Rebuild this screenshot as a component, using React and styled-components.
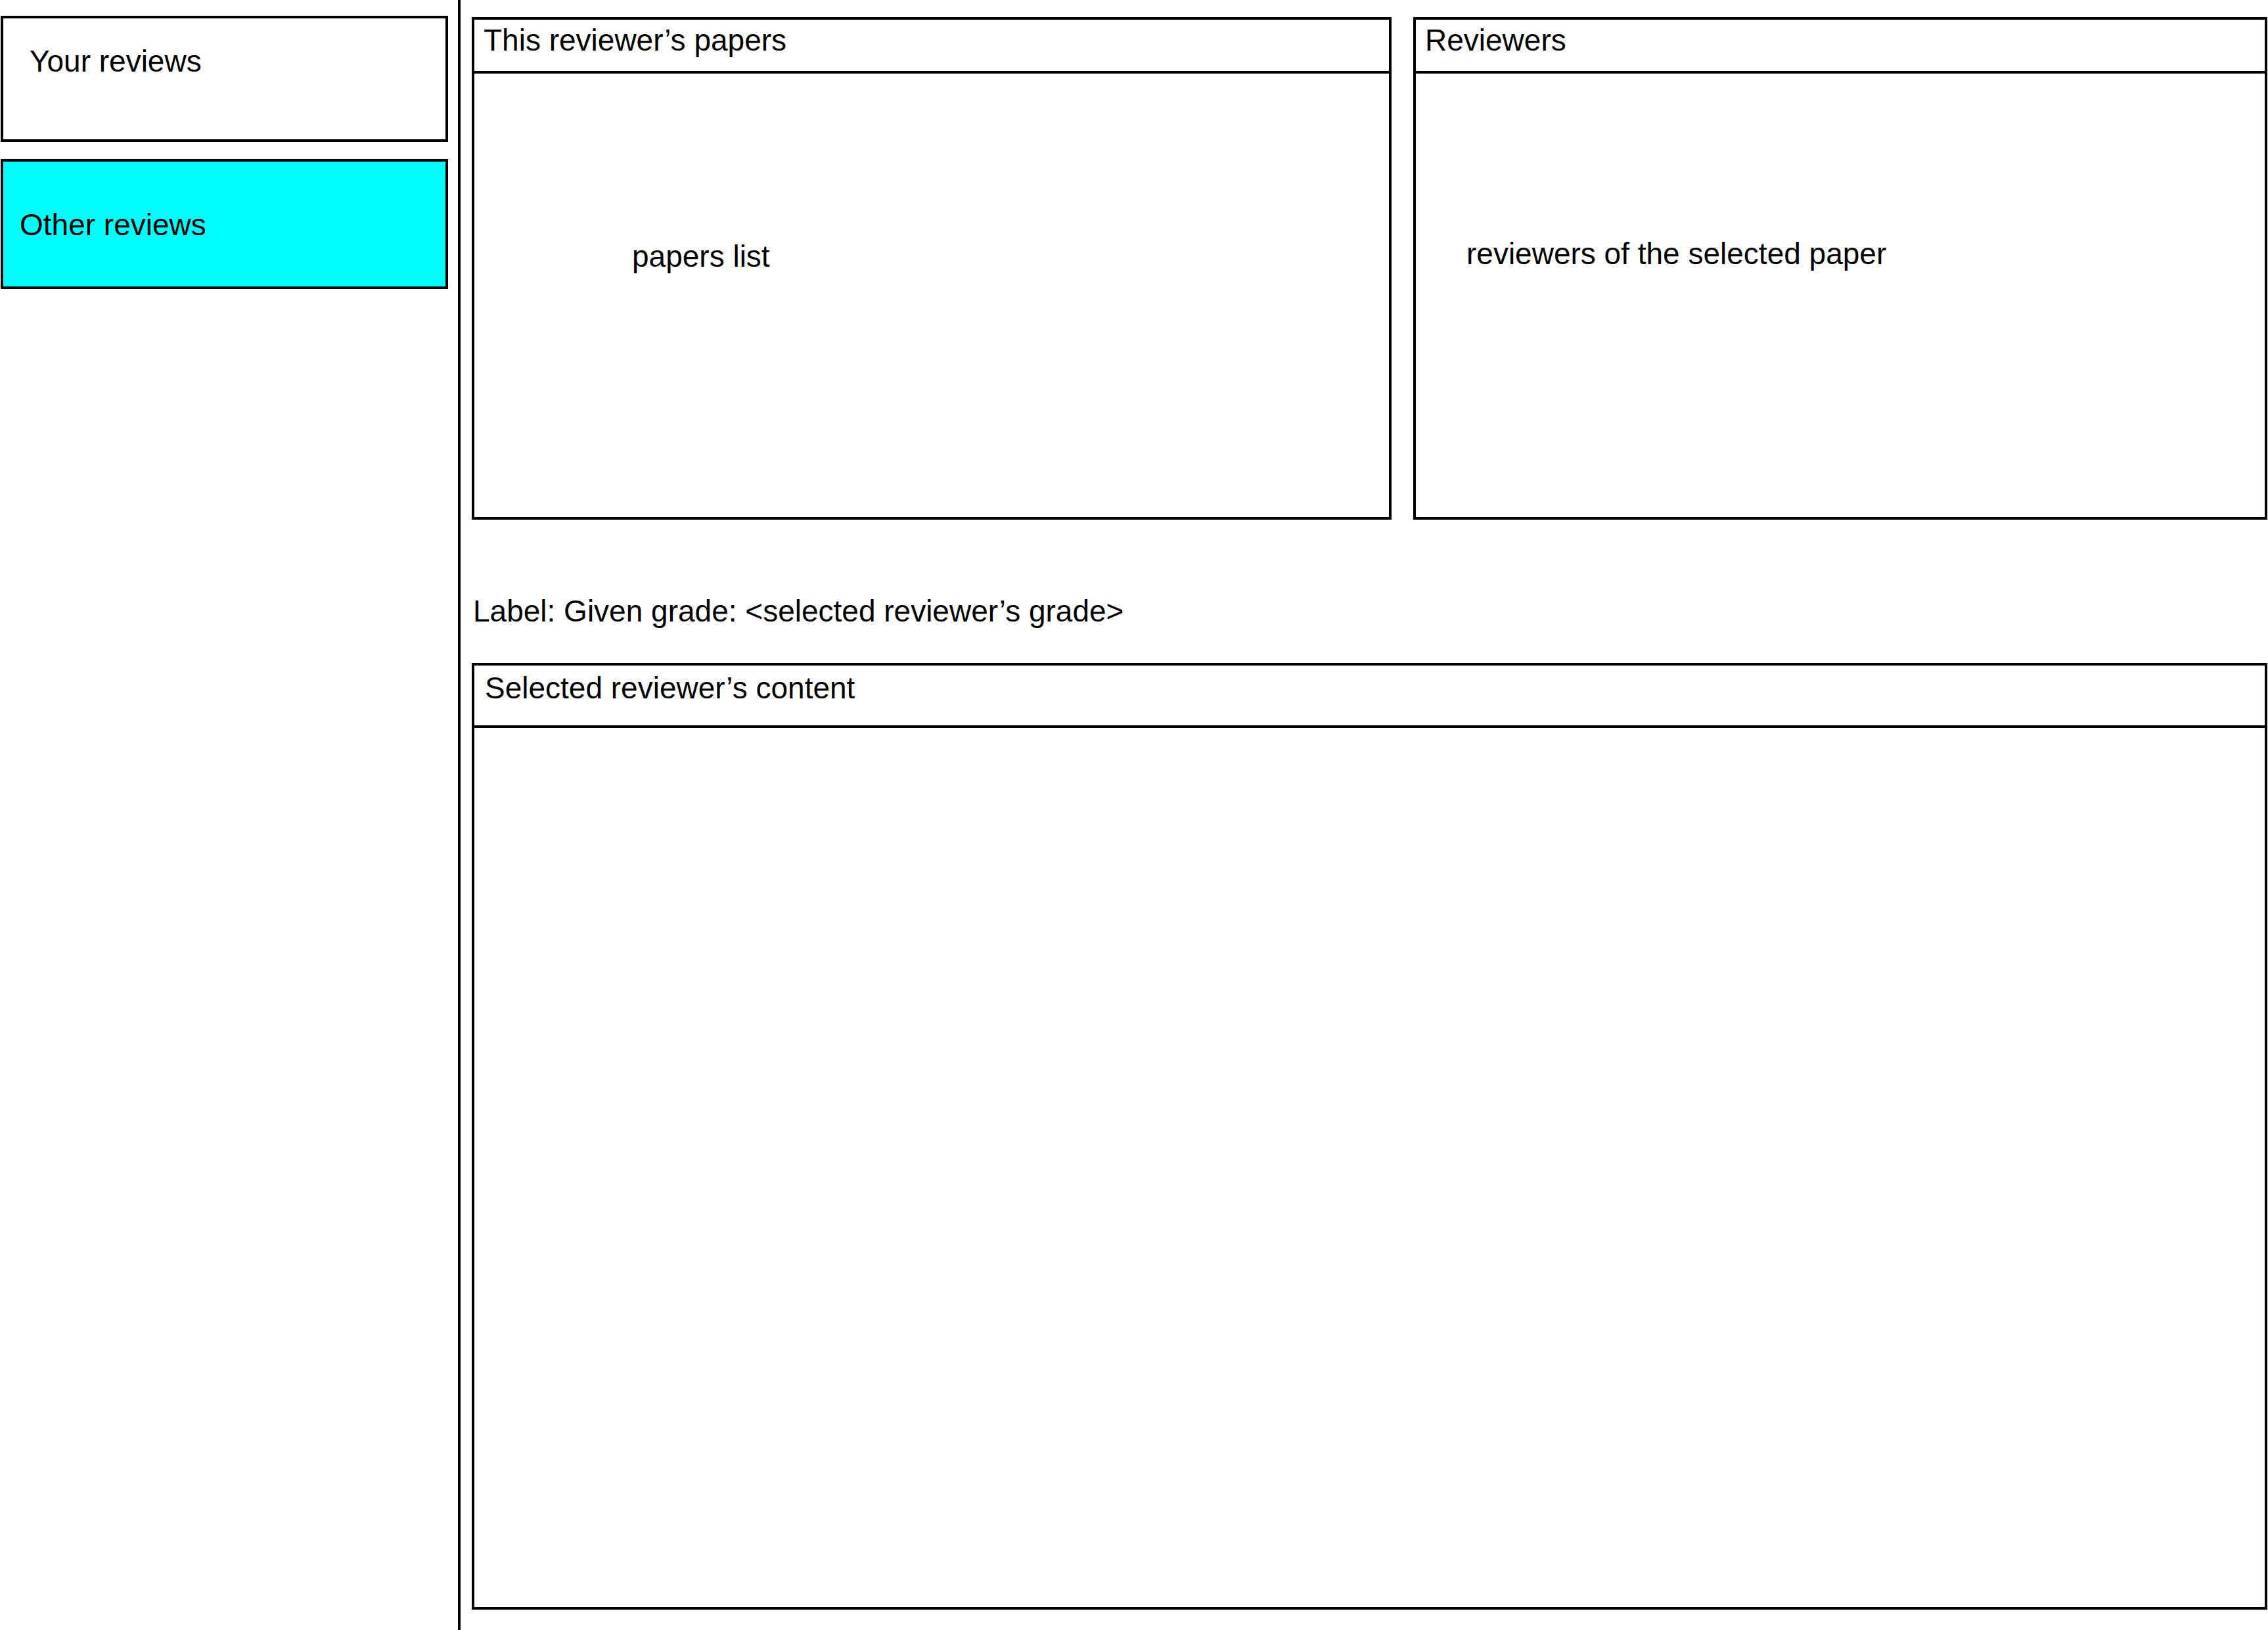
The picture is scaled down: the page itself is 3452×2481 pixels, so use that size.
import React from 'react';
import styled, { createGlobalStyle } from 'styled-components';

const GlobalStyle = createGlobalStyle`
  * {
    box-sizing: border-box;
  }
  html,
  body {
    margin: 0;
    padding: 0;
    background: #fff;
  }
  body {
    font-family: 'Liberation Sans', Arial, sans-serif;
    color: #000;
  }
`;

export default function App() {
  return (
    <>
      <GlobalStyle />
      <Page>
        <Sidebar>
          <NavBox $padTop={39} $padLeft={40} $height={192}>
            Your reviews
          </NavBox>
          <NavBox $active $padTop={70} $padLeft={25} $height={198}>
            Other reviews
          </NavBox>
        </Sidebar>
        <Divider />
        <Main>
          <TopRow>
            <Panel>
              <PanelHeader $padTop={5}>This reviewer’s papers</PanelHeader>
              <PanelBody $padTop={252} $padLeft={240}>
                papers list
              </PanelBody>
            </Panel>
            <Panel>
              <PanelHeader $padTop={5}>Reviewers</PanelHeader>
              <PanelBody $padTop={248} $padLeft={77}>
                reviewers of the selected paper
              </PanelBody>
            </Panel>
          </TopRow>
          <GradeLabel>Label: Given grade: &lt;selected reviewer’s grade&gt;</GradeLabel>
          <ContentPanel>
            <PanelHeader $padTop={8} $padLeft={16} $height={95}>
              Selected reviewer’s content
            </PanelHeader>
            <PanelBody />
          </ContentPanel>
        </Main>
      </Page>
    </>
  );
}

const Page = styled.div`
  display: flex;
  height: 100vh;
  width: 100%;
  font-size: 46px;
  line-height: 1.15;
`;

const Sidebar = styled.div`
  width: 682px;
  flex-shrink: 0;
  padding: 24px 0 0 1px;
  display: flex;
  flex-direction: column;
  gap: 26px;
`;

const NavBox = styled.div`
  width: 681px;
  height: ${(p) => p.$height}px;
  border: 4px solid #000;
  background: ${(p) => (p.$active ? '#00ffff' : '#fff')};
  padding: ${(p) => p.$padTop}px 0 0 ${(p) => p.$padLeft}px;
`;

const Divider = styled.div`
  width: 4px;
  flex-shrink: 0;
  margin-left: 15px;
  background: #000;
`;

const Main = styled.div`
  flex: 1;
  display: flex;
  flex-direction: column;
  padding: 26px 1px 31px 17px;
`;

const TopRow = styled.div`
  display: grid;
  grid-template-columns: 1400px 1fr;
  gap: 33px;
  height: 765px;
`;

const Panel = styled.div`
  border: 4px solid #000;
  display: flex;
  flex-direction: column;
`;

const ContentPanel = styled(Panel)`
  flex: 1;
`;

const PanelHeader = styled.div`
  height: ${(p) => p.$height || 82}px;
  flex-shrink: 0;
  border-bottom: 4px solid #000;
  padding: ${(p) => p.$padTop}px 0 0 ${(p) => p.$padLeft || 14}px;
`;

const PanelBody = styled.div`
  flex: 1;
  padding: ${(p) => p.$padTop || 0}px 0 0 ${(p) => p.$padLeft || 0}px;
`;

const GradeLabel = styled.div`
  margin: 113px 0 52px 2px;
`;
